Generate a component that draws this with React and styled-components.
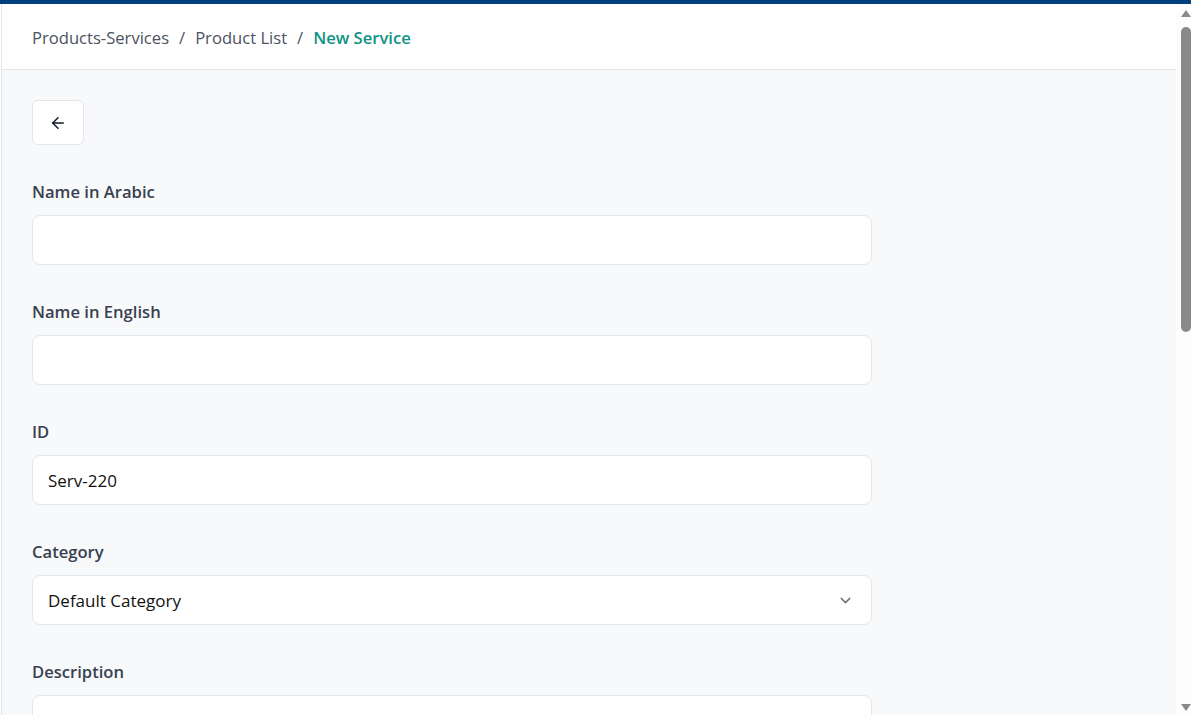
import React from 'react';
import styled, { createGlobalStyle } from 'styled-components';
import { FiArrowLeft, FiChevronDown } from 'react-icons/fi';

const GlobalStyle = createGlobalStyle`
  html, body {
    margin: 0;
    padding: 0;
    height: 100%;
    overflow: hidden;
  }
  body {
    font-family: "Open Sans", "Noto Sans", sans-serif;
    background: #ffffff;
  }
  * {
    box-sizing: border-box;
  }
`;

const TopBar = styled.div`
  height: 4px;
  background: #023f7f;
`;

const Body = styled.div`
  height: calc(100vh - 4px);
  display: flex;
`;

const Main = styled.div`
  flex: 1;
  min-width: 0;
  overflow: hidden;
  margin-left: 1px;
  border-left: 1px solid #e4e6ea;
  background: #f8f9fb;
`;

const Rail = styled.div`
  width: 15px;
  display: flex;
  flex-direction: column;
  align-items: center;
  padding: 6px 0 4px 4px;
  background: #fdfdfd;
`;

const Arrow = styled.div`
  width: 0;
  height: 0;
  border-left: 5px solid transparent;
  border-right: 5px solid transparent;
  ${p => (p.$down ? 'border-top' : 'border-bottom')}: 7px solid #8a8a8a;
`;

const Thumb = styled.div`
  width: 10px;
  height: 305px;
  margin-top: 10px;
  border-radius: 5px;
  background: #8a8a8a;
`;

const Spacer = styled.div`
  flex: 1;
`;

const Header = styled.header`
  height: 66px;
  display: flex;
  align-items: center;
  padding: 2px 30px 0;
  background: #ffffff;
  border-bottom: 1px solid #e4e6ea;
`;

const Crumb = styled.span`
  font-size: 16.6px;
  color: ${p => (p.$active ? '#0f9384' : '#4b5260')};
  font-weight: ${p => (p.$active ? 600 : 400)};
`;

const Sep = styled.span`
  font-size: 16.6px;
  color: #4b5260;
  margin: 0 10px 0 10px;
`;

const Content = styled.main`
  padding: 30px 30px 40px;
`;

const BackButton = styled.button`
  width: 52px;
  height: 45px;
  display: flex;
  align-items: center;
  justify-content: center;
  background: #ffffff;
  border: 1px solid #e4e6ea;
  border-radius: 6px;
  color: #111827;
  font-size: 18px;
  cursor: pointer;
  margin-bottom: 34px;
`;

const Form = styled.form`
  width: 840px;
  display: flex;
  flex-direction: column;
  gap: 34px;
`;

const Field = styled.div`
  display: flex;
  flex-direction: column;
  gap: 12px;
`;

const Label = styled.label`
  font-size: 16.6px;
  font-weight: 600;
  color: #374151;
  line-height: 24px;
  padding-top: 1px;
  margin-bottom: -1px;
`;

const Input = styled.input`
  height: 50px;
  width: 100%;
  border: 1px solid #e4e6ea;
  border-radius: 8px;
  background: #ffffff;
  padding: 0 15px;
  font-family: inherit;
  font-size: 17px;
  color: #111111;
  outline: none;
`;

const SelectBox = styled.div`
  height: 50px;
  display: flex;
  align-items: center;
  justify-content: space-between;
  border: 1px solid #e4e6ea;
  border-radius: 8px;
  background: #ffffff;
  padding: 0 17px 0 15px;
  font-size: 17px;
  color: #111111;
`;

const Chevron = styled(FiChevronDown)`
  color: #6b7280;
  font-size: 17px;
`;

const TextArea = styled.textarea`
  height: 120px;
  width: 100%;
  border: 1px solid #e4e6ea;
  border-radius: 8px;
  background: #ffffff;
  padding: 12px 15px;
  font-family: inherit;
  font-size: 17px;
  resize: none;
  outline: none;
`;

const App = () => {
  return (
    <>
      <GlobalStyle />
      <TopBar />
      <Body>
        <Main>
          <Header>
            <Crumb>Products-Services</Crumb>
            <Sep>/</Sep>
            <Crumb>Product List</Crumb>
            <Sep>/</Sep>
            <Crumb $active>New Service</Crumb>
          </Header>
          <Content>
            <BackButton type="button">
              <FiArrowLeft />
            </BackButton>
            <Form onSubmit={e => e.preventDefault()}>
              <Field>
                <Label>Name in Arabic</Label>
                <Input dir="rtl" />
              </Field>
              <Field>
                <Label>Name in English</Label>
                <Input />
              </Field>
              <Field>
                <Label>ID</Label>
                <Input defaultValue="Serv-220" />
              </Field>
              <Field>
                <Label>Category</Label>
                <SelectBox>
                  <span>Default Category</span>
                  <Chevron />
                </SelectBox>
              </Field>
              <Field>
                <Label>Description</Label>
                <TextArea />
              </Field>
            </Form>
          </Content>
        </Main>
        <Rail>
          <Arrow />
          <Thumb />
          <Spacer />
          <Arrow $down />
        </Rail>
      </Body>
    </>
  );
};

export default App;
